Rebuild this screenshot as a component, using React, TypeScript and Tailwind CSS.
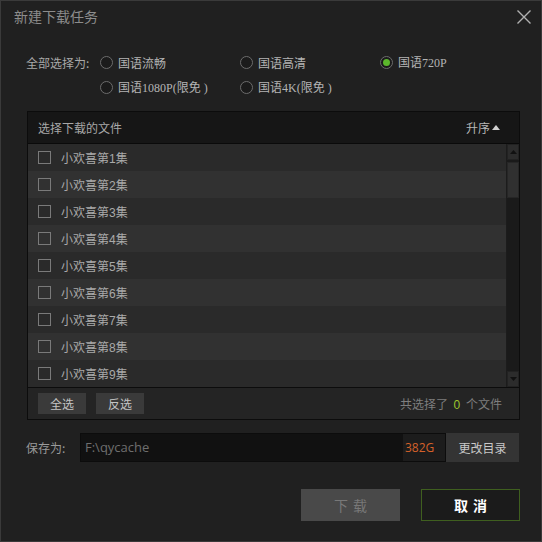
import React from 'react';

const cjk = { fontFamily: '"Noto Sans CJK SC", "Liberation Sans", sans-serif' };
const serif = { fontFamily: '"Liberation Serif", "Noto Sans CJK SC", serif' };

function Radio({ checked }: { checked?: boolean }) {
  return (
    <span className="w-[13px] h-[13px] rounded-full border border-[#6c6c6c] bg-[#1b1b1b] flex items-center justify-center shrink-0">
      {checked && <span className="w-[7px] h-[7px] rounded-full bg-[#5cb82c]" />}
    </span>
  );
}

function Option({ label, checked }: { label: React.ReactNode; checked?: boolean }) {
  return (
    <div className="w-[140px] flex items-center gap-[5px] text-[12px] text-[#b4b4b4]">
      <Radio checked={checked} />
      <span style={cjk}>{label}</span>
    </div>
  );
}

const episodes = [1, 2, 3, 4, 5, 6, 7, 8, 9];

export default function App() {
  return (
    <div
      className="w-[542px] h-[542px] bg-[#202020] border border-[#3a3a3a] flex flex-col overflow-hidden"
      style={cjk}
    >
      {/* title bar */}
      <div className="h-[31px] flex items-center justify-between pl-[13px] pr-[9px]">
        <span className="text-[14px] text-[#8c8c8c]">新建下载任务</span>
        <svg width="16" height="16" viewBox="0 0 16 16">
          <path d="M1.5 1.5 L14.5 14.5 M14.5 1.5 L1.5 14.5" stroke="#b0b0b0" strokeWidth="1.4" fill="none" />
        </svg>
      </div>

      {/* quality options */}
      <div className="mt-[18px] pl-[25px] flex">
        <div className="w-[74px] h-[25px] flex items-center text-[12px] text-[#a8a8a8]">全部选择为:</div>
        <div className="flex flex-col">
          <div className="h-[25px] flex items-center">
            <Option label="国语流畅" />
            <Option label="国语高清" />
            <Option
              checked
              label={
                <>
                  国语<span style={serif} className="text-[12px]">720P</span>
                </>
              }
            />
          </div>
          <div className="h-[25px] flex items-center">
            <Option
              label={
                <>
                  国语<span style={serif} className="text-[12px]">1080P(</span>限免<span style={serif} className="text-[12px]"> )</span>
                </>
              }
            />
            <Option
              label={
                <>
                  国语<span style={serif} className="text-[12px]">4K(</span>限免<span style={serif} className="text-[12px]"> )</span>
                </>
              }
            />
          </div>
        </div>
      </div>

      {/* file list panel */}
      <div className="mt-[11px] ml-[26px] w-[493px] border border-[#0c0c0c] flex flex-col">
        <div className="h-[32px] bg-[#161616] border-b border-[#0a0a0a] flex items-center justify-between pl-[10px] pr-[19px] text-[12px] text-[#a8a8a8]">
          <span>选择下载的文件</span>
          <span className="flex items-center gap-[2px] text-[#b8b8b8]">
            升序
            <svg width="8" height="5" viewBox="0 0 8 5">
              <path d="M0 5 L4 0 L8 5 Z" fill="#d0d0d0" />
            </svg>
          </span>
        </div>

        <div className="flex h-[243px]">
          <div className="flex-1 flex flex-col">
            {episodes.map((n) => (
              <div
                key={n}
                className={`h-[27px] flex items-center pl-[10px] gap-[10px] ${n % 2 === 0 ? 'bg-[#313131]' : 'bg-[#2a2a2a]'}`}
              >
                <span className="w-[13px] h-[13px] border border-[#7a7a7a] shrink-0" />
                <span className="text-[12px] text-[#a9a9a9] pt-[2px]">
                  小欢喜第<span style={{ fontFamily: '"Liberation Sans", sans-serif' }}>{n}</span>集
                </span>
              </div>
            ))}
          </div>
          {/* scrollbar */}
          <div className="w-[13px] bg-[#1a1a1a] flex flex-col border-l border-[#1c1c1c]">
            <div className="h-[16px] bg-[#2c2c2c] border border-[#222] flex items-center justify-center">
              <svg width="7" height="4" viewBox="0 0 7 4">
                <path d="M0 4 L3.5 0 L7 4 Z" fill="#111" />
              </svg>
            </div>
            <div className="mt-[2px] h-[36px] bg-[#303030] border border-[#262626]" />
            <div className="flex-1" />
            <div className="h-[16px] bg-[#2c2c2c] border border-[#222] flex items-center justify-center">
              <svg width="7" height="4" viewBox="0 0 7 4">
                <path d="M0 0 L3.5 4 L7 0 Z" fill="#111" />
              </svg>
            </div>
          </div>
        </div>

        <div className="h-[32px] border-t border-[#0c0c0c] bg-[#242424] flex items-center pl-[10px] pr-[17px]">
          <button className="w-[48px] h-[21px] bg-[#3a3a3a] text-[12px] text-[#c4c4c4]">全选</button>
          <button className="ml-[10px] w-[48px] h-[21px] bg-[#3a3a3a] text-[12px] text-[#c4c4c4]">反选</button>
          <span className="ml-auto text-[12px] text-[#7e7e7e] pt-[2px]">
            共选择了 <span className="mx-[3px] text-[#9cc42c]" style={{ fontFamily: '"Liberation Sans", sans-serif' }}>0</span> 个文件
          </span>
        </div>
      </div>

      {/* save path */}
      <div className="mt-[13px] flex items-center pl-[25px]">
        <span className="w-[54px] text-[12px] text-[#9a9a9a]">保存为:</span>
        <div className="w-[366px] h-[29px] flex border border-[#0c0c0c] bg-[#111111]">
          <span
            className="flex-1 flex items-center pl-[4px] text-[13px] text-[#6e6e6e]"
            style={{ fontFamily: '"Open Sans", "Liberation Sans", sans-serif' }}
          >
            F:\qycache
          </span>
          <span
            className="w-[42px] bg-[#1c1c1c] flex items-center pl-[2px] text-[12px] text-[#d5612a]"
            style={{ fontFamily: '"Open Sans", "Liberation Sans", sans-serif' }}
          >
            382G
          </span>
        </div>
        <button className="w-[73px] h-[29px] bg-[#343434] text-[12px] text-[#c8c8c8]">更改目录</button>
      </div>

      {/* actions */}
      <div className="mt-[27px] flex justify-end gap-[21px] pr-[21px]">
        <button className="w-[99px] h-[32px] bg-[#494949] text-[14px] text-[#787878] tracking-[5px] pl-[5px]">下载</button>
        <button className="w-[99px] h-[32px] bg-[#1b1b1b] border border-[#3f5f1f] text-[14px] font-bold text-white tracking-[5px] pl-[5px]">
          取消
        </button>
      </div>
    </div>
  );
}
